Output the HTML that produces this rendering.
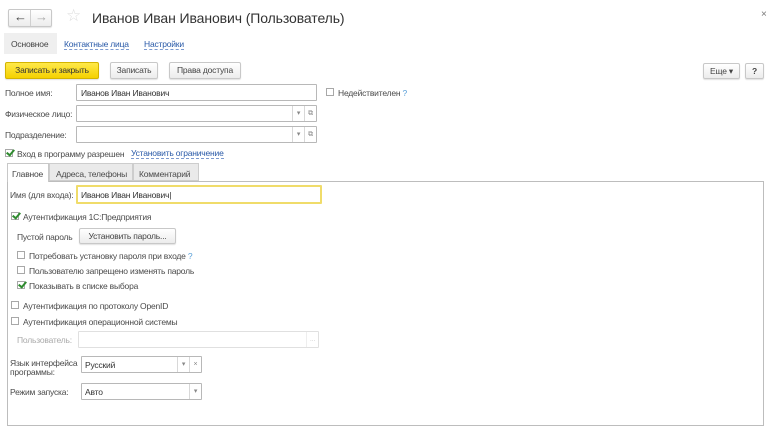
<!DOCTYPE html>
<html><head><meta charset="utf-8"><style>
*{box-sizing:border-box;margin:0;padding:0}
body{width:774px;height:435px;background:#fff;font-family:"Liberation Sans",Arial,sans-serif;font-size:8.5px;letter-spacing:-0.2px;color:#4a4a4a;position:relative;overflow:hidden}
.a{position:absolute;white-space:nowrap}
.btn{position:absolute;border:1px solid #c8c8c8;border-radius:2px;background:linear-gradient(#fff,#ececec);text-align:center;color:#444;box-shadow:0 1px 1px rgba(0,0,0,.12)}
.in{position:absolute;border:1px solid #b8b8b8;background:#fff;border-radius:1px}
.cb{position:absolute;width:8px;height:8px;border:1px solid #a8a8a8;background:#fff}
.ck::after{content:"";position:absolute;left:2px;top:-2px;width:3px;height:6px;border:solid #2e8b2e;border-width:0 2px 2px 0;transform:rotate(40deg)}
.link{color:#2a5aa8;border-bottom:1px dashed #7c9ad0}
.dd{position:absolute;top:0;bottom:0;width:12px;border-left:1px solid #d8d8d8;text-align:center;color:#888;font-size:7px;line-height:15px}
</style></head><body>
<div class="btn" style="left:8px;top:9px;width:44px;height:18px"></div>
<div class="a" style="left:30px;top:10px;height:16px;border-left:1px solid #d0d0d0"></div>
<div class="a" style="left:14px;top:9px;font-size:13px;color:#444">&#8592;</div>
<div class="a" style="left:35px;top:9px;font-size:13px;color:#aaa">&#8594;</div>
<div class="a" style="left:66px;top:6px;font-size:17px;color:#ddd">&#9734;</div>
<div class="a" style="left:92px;top:10px;font-size:14px;letter-spacing:-0.1px;color:#333">Иванов Иван Иванович (Пользователь)</div>
<div class="a" style="left:761px;top:9px;font-size:10px;color:#777">×</div>

<div class="a" style="left:4px;top:33px;width:53px;height:21px;background:#efefef"></div>
<div class="a" style="left:11px;top:39px;color:#444">Основное</div>
<div class="a link" style="left:64px;top:39px">Контактные лица</div>
<div class="a link" style="left:144px;top:39px">Настройки</div>

<div class="btn" style="left:5px;top:62px;width:94px;height:17px;background:linear-gradient(#ffe94a,#f5d100);border-color:#d4b400;color:#333;line-height:15px">Записать и закрыть</div>
<div class="btn" style="left:110px;top:62px;width:48px;height:17px;line-height:15px">Записать</div>
<div class="btn" style="left:169px;top:62px;width:72px;height:17px;line-height:15px">Права доступа</div>
<div class="btn" style="left:703px;top:63px;width:37px;height:16px;line-height:14px">Еще ▾</div>
<div class="btn" style="left:745px;top:63px;width:19px;height:16px;line-height:14px;font-weight:bold">?</div>

<div class="a" style="left:5px;top:88px">Полное имя:</div>
<div class="in" style="left:76px;top:84px;width:241px;height:17px"><span class="a" style="left:4px;top:3px;color:#333">Иванов Иван Иванович</span></div>
<div class="cb" style="left:326px;top:88px"></div>
<div class="a" style="left:338px;top:88px">Недействителен <span style="color:#5aa0d8">?</span></div>

<div class="a" style="left:5px;top:109px">Физическое лицо:</div>
<div class="in" style="left:76px;top:105px;width:241px;height:17px"><div class="dd" style="right:12px">▾</div><div class="dd" style="right:0">⧉</div></div>
<div class="a" style="left:5px;top:130px">Подразделение:</div>
<div class="in" style="left:76px;top:126px;width:241px;height:17px"><div class="dd" style="right:12px">▾</div><div class="dd" style="right:0">⧉</div></div>

<div class="cb ck" style="left:5px;top:149px"></div>
<div class="a" style="left:17px;top:149px">Вход в программу разрешен</div>
<div class="a link" style="left:131px;top:148px">Установить ограничение</div>

<div class="a" style="left:7px;top:181px;width:757px;height:245px;border:1px solid #bdbdbd"></div>
<div class="a" style="left:7px;top:163px;width:42px;height:19px;background:#fff;border:1px solid #c8c8c8;border-bottom:none;padding:5px 0 0 4px;color:#444">Главное</div>
<div class="a" style="left:49px;top:163px;width:84px;height:18px;background:#eaeaea;border:1px solid #cdcdcd;padding:5px 0 0 6px">Адреса, телефоны</div>
<div class="a" style="left:133px;top:163px;width:66px;height:18px;background:#eaeaea;border:1px solid #cdcdcd;padding:5px 0 0 5px">Комментарий</div>

<div class="a" style="left:10px;top:190px">Имя (для входа):</div>
<div class="in" style="left:76px;top:185px;width:246px;height:19px;border:2px solid #f0dc6a"><span class="a" style="left:3px;top:3px;color:#333">Иванов Иван Иванович|</span></div>

<div class="cb ck" style="left:11px;top:212px"></div>
<div class="a" style="left:23px;top:212px">Аутентификация 1С:Предприятия</div>
<div class="a" style="left:17px;top:232px">Пустой пароль</div>
<div class="btn" style="left:79px;top:228px;width:97px;height:16px;line-height:14px">Установить пароль...</div>
<div class="cb" style="left:17px;top:251px"></div><div class="a" style="left:29px;top:251px">Потребовать установку пароля при входе <span style="color:#5aa0d8">?</span></div>
<div class="cb" style="left:17px;top:266px"></div><div class="a" style="left:29px;top:266px">Пользователю запрещено изменять пароль</div>
<div class="cb ck" style="left:17px;top:281px"></div><div class="a" style="left:29px;top:281px">Показывать в списке выбора</div>
<div class="cb" style="left:11px;top:301px"></div><div class="a" style="left:23px;top:301px">Аутентификация по протоколу OpenID</div>
<div class="cb" style="left:11px;top:317px"></div><div class="a" style="left:23px;top:317px">Аутентификация операционной системы</div>
<div class="a" style="left:17px;top:335px;color:#aaa">Пользователь:</div>
<div class="in" style="left:78px;top:331px;width:241px;height:17px;border-color:#e0e0e0"><div class="dd" style="right:0;border-color:#eee;color:#ccc">...</div></div>

<div class="a" style="left:10px;top:359px;line-height:9px">Язык интерфейса<br>программы:</div>
<div class="in" style="left:81px;top:356px;width:121px;height:17px"><span class="a" style="left:3px;top:3px;color:#333">Русский</span><div class="dd" style="right:12px">▾</div><div class="dd" style="right:0">×</div></div>
<div class="a" style="left:10px;top:387px">Режим запуска:</div>
<div class="in" style="left:81px;top:383px;width:121px;height:17px"><span class="a" style="left:3px;top:3px;color:#333">Авто</span><div class="dd" style="right:0">▾</div></div>
</body></html>
